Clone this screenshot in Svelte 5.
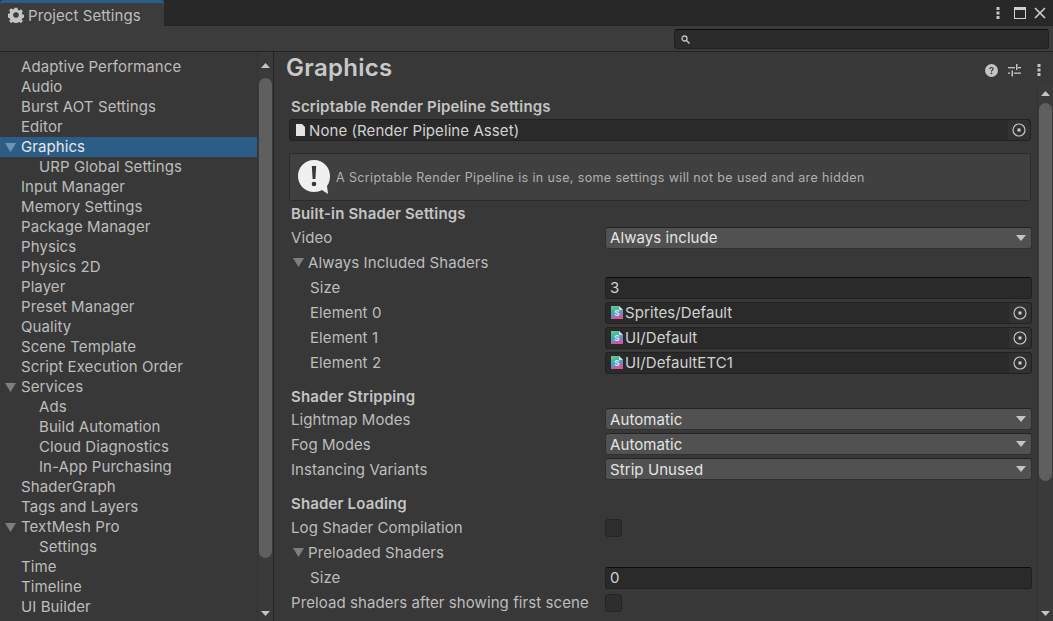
<script>
  const items = [
    ['Adaptive Performance', 0], ['Audio', 0], ['Burst AOT Settings', 0], ['Editor', 0],
    ['Graphics', 0, 'sel'], ['URP Global Settings', 1], ['Input Manager', 0], ['Memory Settings', 0],
    ['Package Manager', 0], ['Physics', 0], ['Physics 2D', 0], ['Player', 0], ['Preset Manager', 0],
    ['Quality', 0], ['Scene Template', 0], ['Script Execution Order', 0], ['Services', 0, 'open'],
    ['Ads', 1], ['Build Automation', 1], ['Cloud Diagnostics', 1], ['In-App Purchasing', 1],
    ['ShaderGraph', 0], ['Tags and Layers', 0], ['TextMesh Pro', 0, 'open'], ['Settings', 1],
    ['Time', 0], ['Timeline', 0], ['UI Builder', 0]
  ];
</script>

{#snippet target()}
  <span class="target"><svg width="14" height="14" viewBox="0 0 14 14"><circle cx="7" cy="7" r="6" fill="none" stroke="#c4c4c4" stroke-width="1.2"/><rect x="5.5" y="5.5" width="3" height="3" fill="#d2d2d2"/></svg></span>
{/snippet}

{#snippet shader()}
  <svg class="sh" width="12" height="13" viewBox="0 0 12 13">
    <defs><linearGradient id="shg" x1="0" y1="0" x2="0.3" y2="1"><stop offset="0" stop-color="#7fc87a"/><stop offset=".35" stop-color="#3fb9a6"/><stop offset=".65" stop-color="#4f9cc8"/><stop offset="1" stop-color="#d4569c"/></linearGradient></defs>
    <path d="M0 0H8L12 4V13H0Z" fill="url(#shg)"/>
    <path d="M8 0L12 4H8Z" fill="#dcdcdc"/>
    <text x="6" y="10" text-anchor="middle" class="shs">S</text>
  </svg>
{/snippet}

{#snippet caret()}
  <svg class="dd" width="10" height="6" viewBox="0 0 10 6"><path d="M0 0H10L5 6Z" fill="#c4c4c4"/></svg>
{/snippet}

{#snippet fold()}
  <svg class="fold" width="11" height="9" viewBox="0 0 11 9"><path d="M0 0H11L5.5 9Z" fill="#7e7e7e"/></svg>
{/snippet}

<div class="win">
  <header class="tabs">
    <div class="tab">
      <svg width="16" height="16" viewBox="0 0 16 16"><path fill="#c4c4c4" fill-rule="evenodd" d="M6.6 0.8h2.8l.4 2 1.4.6 1.7-1.1 2 2-1.1 1.7.6 1.4 2 .4v2.8l-2 .4-.6 1.4 1.1 1.7-2 2-1.7-1.1-1.4.6-.4 2H6.6l-.4-2-1.4-.6-1.7 1.1-2-2 1.1-1.7-.6-1.4-2-.4V6.8l2-.4.6-1.4L1.1 3.3l2-2 1.7 1.1 1.4-.6ZM8 5.2a2.8 2.8 0 1 0 0 5.6 2.8 2.8 0 0 0 0-5.6Z"/></svg>
      <span>Project Settings</span>
    </div>
    <div class="winbtns">
      <svg width="4" height="12" viewBox="0 0 4 12"><g fill="#c4c4c4"><rect x="0.5" y="0" width="3" height="3"/><rect x="0.5" y="4.5" width="3" height="3"/><rect x="0.5" y="9" width="3" height="3"/></g></svg>
      <svg width="12" height="12" viewBox="0 0 12 12"><rect x=".5" y=".5" width="11" height="11" fill="none" stroke="#d2d2d2"/><rect width="12" height="3" fill="#d2d2d2"/></svg>
      <svg width="12" height="12" viewBox="0 0 12 12"><path d="M1 1L11 11M11 1L1 11" stroke="#d2d2d2" stroke-width="1.5"/></svg>
    </div>
  </header>

  <div class="toolbar">
    <div class="search">
      <svg width="9" height="9" viewBox="0 0 9 9"><circle cx="3.5" cy="3.5" r="2.5" fill="none" stroke="#c4c4c4" stroke-width="1.3"/><path d="M5.5 5.5L8.5 8.5" stroke="#c4c4c4" stroke-width="1.5"/></svg>
    </div>
  </div>

  <div class="body">
    <aside class="side">
      <nav class="list">
        {#each items as [name, lvl, flag]}
          <div class="item" class:sel={flag === 'sel'} class:sub={lvl === 1}>
            {#if flag}<svg class="tri" width="11" height="9" viewBox="0 0 11 9"><path d="M0 0H11L5.5 9Z" fill={flag === 'sel' ? '#6f93b3' : '#7e7e7e'}/></svg>{/if}
            {name}
          </div>
        {/each}
      </nav>
      <div class="sbar">
        <svg class="up" width="9" height="5" viewBox="0 0 9 5"><path d="M0 5H9L4.500 0Z" fill="#c4c4c4"/></svg>
        <div class="thumb left"></div>
        <svg class="down" width="9" height="5" viewBox="0 0 9 5"><path d="M0 0H9L4.500 5Z" fill="#c4c4c4"/></svg>
      </div>
    </aside>

    <main class="pane">
      <div class="title">
        <h1>Graphics</h1>
        <div class="ticons">
          <svg width="13" height="13" viewBox="0 0 13 13"><circle cx="6.500" cy="6.500" r="6.500" fill="#c4c4c4"/><path d="M4.300 5.200C4.300 3.900 5.200 3 6.500 3S8.700 3.800 8.700 4.900C8.700 6.300 6.900 6.400 6.900 7.800H5.900C5.900 6 7.400 6 7.400 5 7.400 4.500 7 4.100 6.500 4.100S5.500 4.500 5.500 5.200Z" fill="#383838"/><rect x="5.700" y="8.600" width="1.500" height="1.500" fill="#383838"/></svg>
          <svg width="13" height="13" viewBox="0 0 13 13"><g fill="#c4c4c4"><rect x="0" y="3" width="7" height="1.300"/><rect x="8" y="0" width="1.500" height="6"/><rect x="10" y="3" width="3" height="1.300"/><rect x="0" y="8.500" width="2" height="1.300"/><rect x="3.500" y="6.500" width="1.500" height="6"/><rect x="6" y="8.500" width="7" height="1.300"/></g></svg>
          <svg width="4" height="12" viewBox="0 0 4 12"><g fill="#c4c4c4"><rect x="0.500" y="0" width="3" height="3"/><rect x="0.500" y="4.500" width="3" height="3"/><rect x="0.500" y="9" width="3" height="3"/></g></svg>
        </div>
      </div>

      <div class="content">
        <div class="form">
          <h2>Scriptable Render Pipeline Settings</h2>
          <div class="field obj wide">
            <svg class="doc" width="9" height="12" viewBox="0 0 9 12"><path d="M0 0H6L9 3V12H0Z" fill="#e4e4e4"/></svg>
            <span>None (Render Pipeline Asset)</span>
            {@render target()}
          </div>
          <div class="help">
            <svg width="34" height="36" viewBox="0 0 34 36"><path d="M17 1C8 1 1 8 1 17S8 33 17 33C20 33 23 32 25 31L31 35 30 27C32 24.500 33 21 33 17 33 8 26 1 17 1Z" fill="#f0f0f0"/><path d="M14.800 7H19.200L18.400 20H15.600Z" fill="#383838"/><circle cx="17" cy="25" r="2.300" fill="#383838"/></svg>
            <span>A Scriptable Render Pipeline is in use, some settings will not be used and are hidden</span>
          </div>

          <h2 class="h-b">Built-in Shader Settings</h2>
          <div class="row"><label>Video</label><div class="field drop">Always include{@render caret()}</div></div>
          <div class="row"><label class="foldl">{@render fold()}Always Included Shaders</label></div>
          <div class="row"><label class="ind">Size</label><div class="field num">3</div></div>
          <div class="row"><label class="ind">Element 0</label><div class="field obj">{@render shader()}<span>Sprites/Default</span>{@render target()}</div></div>
          <div class="row"><label class="ind">Element 1</label><div class="field obj">{@render shader()}<span>UI/Default</span>{@render target()}</div></div>
          <div class="row"><label class="ind">Element 2</label><div class="field obj">{@render shader()}<span>UI/DefaultETC1</span>{@render target()}</div></div>

          <h2 class="h-s">Shader Stripping</h2>
          <div class="row"><label>Lightmap Modes</label><div class="field drop">Automatic{@render caret()}</div></div>
          <div class="row"><label>Fog Modes</label><div class="field drop">Automatic{@render caret()}</div></div>
          <div class="row"><label>Instancing Variants</label><div class="field drop">Strip Unused{@render caret()}</div></div>

          <h2 class="h-l">Shader Loading</h2>
          <div class="row"><label>Log Shader Compilation</label><div class="check"></div></div>
          <div class="row"><label class="foldl">{@render fold()}Preloaded Shaders</label></div>
          <div class="row"><label class="ind">Size</label><div class="field num">0</div></div>
          <div class="row"><label>Preload shaders after showing first scene</label><div class="check"></div></div>
        </div>
        <div class="sbar right">
          <svg class="up" width="9" height="5" viewBox="0 0 9 5"><path d="M0 5H9L4.500 0Z" fill="#c4c4c4"/></svg>
          <div class="thumb"></div>
          <svg class="down" width="9" height="5" viewBox="0 0 9 5"><path d="M0 0H9L4.500 5Z" fill="#c4c4c4"/></svg>
        </div>
      </div>
    </main>
  </div>
</div>

<style>
  :global(body) { margin: 0; background: #383838; }
  .win {
    width: 1053px; height: 621px; overflow: hidden; display: flex; flex-direction: column;
    background: #383838; color: #bdbdbd;
    font-family: Inter, "Noto Sans", sans-serif; font-size: 15px; letter-spacing: .08px;
  }
  .tabs { height: 26px; flex: none; background: #282828; display: flex; justify-content: space-between; border-bottom: 1px solid #232323; box-sizing: border-box; }
  .tab {
    width: 164px; height: 26px; box-sizing: border-box; background: #3c3c3c;
    border-top: 3px solid #2c5d87; border-radius: 3px 3px 0 0;
    display: flex; align-items: center; gap: 4px; padding: 1px 0 0 8px;
  }
  .winbtns { display: flex; align-items: center; gap: 8px; padding-right: 7px; }
  .winbtns svg:first-child { margin-right: 6px; }
  .toolbar { height: 26px; flex: none; background: #3c3c3c; border-bottom: 1px solid #232323; display: flex; justify-content: flex-end; box-sizing: border-box; }
  .search {
    width: 375px; height: 20px; margin: 3px 4px 0 0; box-sizing: border-box;
    background: #2a2a2a; border: 1px solid #212121; border-top-color: #0d0d0d; border-radius: 3px;
    display: flex; align-items: center; padding-left: 6px;
  }
  .body { flex: 1; min-height: 0; display: flex; }
  .side { width: 274px; flex: none; box-sizing: border-box; display: flex; border-right: 1px solid #232323; }
  .list { flex: 1; padding-top: 5px; }
  .item { height: 20px; line-height: 20px; padding-left: 21px; position: relative; white-space: nowrap; }
  .item.sub { padding-left: 39px; }
  .item.sel { background: #2c5d87; color: #e8e8e8; }
  .tri { position: absolute; left: 5px; top: 6px; }
  .sbar { width: 16px; flex: none; position: relative; background: #3a3a3a; border-left: 1px solid #343434; box-sizing: border-box; }
  .up { position: absolute; left: 3px; top: 11px; }
  .down { position: absolute; left: 3px; bottom: 5px; }
  .thumb { position: absolute; left: 1px; right: 1px; top: 26px; height: 480px; background: #5f5f5f; border-radius: 7px; }
  .pane { flex: 1; min-width: 0; display: flex; flex-direction: column; }
  .title { height: 34px; flex: none; display: flex; align-items: center; justify-content: space-between; padding: 0 12px; }
  h1 { margin: 0; font-size: 24px; font-weight: 600; color: #c8c8c8; letter-spacing: .3px; position: relative; top: -2px; }
  .ticons { display: flex; align-items: center; gap: 10px; position: relative; top: 1px; }
  .ticons svg:last-child { margin-left: 6px; }
  .content { flex: 1; min-height: 0; display: flex; }
  .form { flex: 1; min-width: 0; padding: 11px 5px 0 16px; }
  h2 { margin: 0; height: 20px; line-height: 20px; font-size: 15px; font-weight: 600; color: #c4c4c4; padding-left: 1px; letter-spacing: .15px; }
  h2.h-b { height: 21px; margin-top: 0; }
  h2.h-s { margin-top: 12px; height: 19.5px; }
  h2.h-l { margin-top: 12px; height: 21.5px; }
  .row { height: 25px; display: flex; align-items: center; }
  label { width: 315px; flex: none; padding-left: 1px; box-sizing: border-box; white-space: nowrap; }
  label.ind { padding-left: 20px; }
  label.foldl { width: auto; padding-left: 3px; display: flex; align-items: center; gap: 3px; }
  .fold { margin-right: 1px; }
  .field {
    flex: 1; height: 22px; box-sizing: border-box; display: flex; align-items: center;
    background: #2a2a2a; border: 1px solid #212121; border-radius: 3px; color: #d2d2d2; min-width: 0;
    position: relative;
  }
  .field.num { padding-left: 4px; border-top-color: #0d0d0d; }
  .field.drop { background: #515151; border-color: #303030; border-top-color: #242424; padding-left: 4px; justify-content: space-between; padding-right: 5px; color: #e4e4e4; }
  .field.obj { padding-left: 5px; gap: 2px; }
  .field.wide { margin-top: 2px; margin-left: -1px; flex: none; width: 742px; padding-left: 6px; gap: 4px; }
  .field .target { position: absolute; right: 0; top: 0; bottom: 0; width: 22px; background: #313131; display: flex; align-items: center; justify-content: center; border-radius: 0 3px 3px 0; }
  .sh { flex: none; }
  .shs { font: 700 8px Inter, sans-serif; fill: #e8e8e8; }
  .help {
    margin: 12px 0 3px -1px; width: 742px; height: 48px; box-sizing: border-box;
    background: #404040; border: 1px solid #2a2a2a; border-radius: 3px;
    display: flex; align-items: center; gap: 5px; padding-left: 7px;
    font-size: 12.500px; letter-spacing: .37px; color: #b0b0b0;
  }
  .check { width: 17px; height: 18px; box-sizing: border-box; background: #2e2e2e; border: 1px solid #242424; border-radius: 3px; }
  .sbar.right .up { top: 5px; left: 3px; }
  .sbar.right .thumb { top: 17px; height: 378px; }
</style>
